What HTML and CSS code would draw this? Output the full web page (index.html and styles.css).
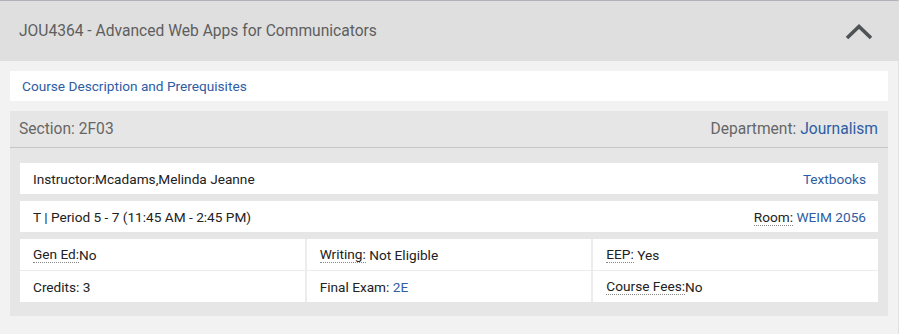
FILE: index.html
```html
<!DOCTYPE html>
<html>
<head>
<meta charset="utf-8">
<link rel="stylesheet" href="styles.css">
</head>
<body>
<div class="course">
  <div class="course-head">
    <span class="course-title">JOU4364 - Advanced Web Apps for Communicators</span>
    <svg class="chevron" width="28" height="16" viewBox="0 0 28 16"><polyline points="2,14 14,2.5 26,14" fill="none" stroke="#4e5455" stroke-width="3.6" stroke-linejoin="miter"/></svg>
  </div>
  <div class="course-body">
    <div class="desc-box"><a class="link" href="#">Course Description and Prerequisites</a></div>
    <div class="section">
      <div class="section-head">
        <span>Section: 2F03</span>
        <span>Department: <a class="link" href="#">Journalism</a></span>
      </div>
      <div class="section-body">
        <div class="row">
          <span>Instructor:Mcadams,Melinda Jeanne</span>
          <a class="link" href="#">Textbooks</a>
        </div>
        <div class="row">
          <span>T | Period 5 - 7 (11:45 AM - 2:45 PM)</span>
          <span><span class="abbr">Room:</span> <a class="link" href="#">WEIM 2056</a></span>
        </div>
        <div class="grid">
          <div class="cell"><span class="abbr">Gen Ed:</span>No</div>
          <div class="cell"><span class="abbr">Writing:</span> Not Eligible</div>
          <div class="cell"><span class="abbr">EEP:</span> Yes</div>
          <div class="cell">Credits: 3</div>
          <div class="cell">Final Exam: <a class="link" href="#">2E</a></div>
          <div class="cell"><span class="abbr">Course Fees:</span>No</div>
        </div>
      </div>
    </div>
  </div>
</div>
</body>
</html>
```
FILE: styles.css
```css
* { box-sizing: border-box; }
html, body { margin: 0; padding: 0; }
body {
  background: #f2f2f2;
  font-family: Roboto, "Liberation Sans", sans-serif;
  color: #222;
  width: 899px;
  height: 334px;
  overflow: hidden;
}
.course {
  border-top: 1px solid #b3b0bb;
  border-right: 1px solid #e0e0e0;
  width: 899px;
}
.course-head {
  height: 60px;
  background: #dfdfdf;
  display: flex;
  align-items: center;
  justify-content: space-between;
  padding: 0 25px 0 19px;
}
.course-title {
  font-size: 15.6px;
  color: #5e5e5e;
}
.chevron { display: block; margin-top: 1px; }
.course-body {
  background: #f2f2f2;
  padding: 10px 10px 18px 10px;
}
.link { color: #2e5da3; text-decoration: none; }
.desc-box {
  background: #fff;
  height: 30px;
  display: flex;
  align-items: center;
  padding: 0 12px;
  font-size: 13.65px;
  margin-bottom: 10px;
}
.section {
  background: #e6e6e6;
}
.section-head {
  height: 37px;
  border-bottom: 1px solid #c6c6c6;
  display: flex;
  align-items: center;
  justify-content: space-between;
  padding: 0 10px 0 9px;
  font-size: 15.6px;
  color: #666;
}
.section-body {
  padding: 15px 10px 14px 10px;
  display: flex;
  flex-direction: column;
  gap: 7px;
  font-size: 13.65px;
}
.row {
  background: #fff;
  height: 31px;
  display: flex;
  align-items: center;
  justify-content: space-between;
  padding: 0 12px 0 13px;
}
.grid {
  display: grid;
  grid-template-columns: 1fr 1fr 1fr;
  column-gap: 2px;
  row-gap: 1px;
  background: #ececec;
}
.grid .cell {
  background: #fff;
  height: 31px;
  display: flex;
  align-items: center;
  padding: 0 12px 0 13px;
  white-space: pre;
}
.abbr {
  border-bottom: 1px dotted #888;
}
```
